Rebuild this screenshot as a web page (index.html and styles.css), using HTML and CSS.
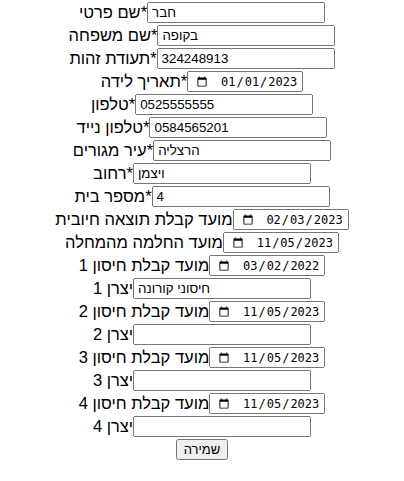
FILE: index.html
```html
<!DOCTYPE html>
<html lang="he">
<head>
<meta charset="utf-8">
<link rel="stylesheet" href="styles.css">
</head>
<body>
<form class="form">
  <div class="row"><label class="lbl">שם פרטי*</label><input class="txt" type="text" value="חבר"></div>
  <div class="row"><label class="lbl">שם משפחה*</label><input class="txt" type="text" value="בקופה"></div>
  <div class="row"><label class="lbl">תעודת זהות*</label><input class="txt" type="text" value="324248913"></div>
  <div class="row"><label class="lbl">תאריך לידה*</label><input class="date" type="date" value="2023-01-01"></div>
  <div class="row"><label class="lbl">טלפון*</label><input class="txt" type="text" value="0525555555"></div>
  <div class="row"><label class="lbl">טלפון נייד*</label><input class="txt" type="text" value="0584565201"></div>
  <div class="row"><label class="lbl">עיר מגורים*</label><input class="txt" type="text" value="הרצליה"></div>
  <div class="row"><label class="lbl">רחוב*</label><input class="txt" type="text" value="ויצמן"></div>
  <div class="row"><label class="lbl">מספר בית*</label><input class="txt" type="text" value="4"></div>
  <div class="row"><label class="lbl">מועד קבלת תוצאה חיובית</label><input class="date" type="date" value="2023-02-03"></div>
  <div class="row"><label class="lbl">מועד החלמה מהמחלה</label><input class="date" type="date" value="2023-11-05"></div>
  <div class="row"><label class="lbl">מועד קבלת חיסון 1</label><input class="date" type="date" value="2022-03-02"></div>
  <div class="row"><label class="lbl">יצרן 1</label><input class="txt" type="text" value="חיסוני קורונה"></div>
  <div class="row"><label class="lbl">מועד קבלת חיסון 2</label><input class="date" type="date" value="2023-11-05"></div>
  <div class="row"><label class="lbl">יצרן 2</label><input class="txt" type="text" value=""></div>
  <div class="row"><label class="lbl">מועד קבלת חיסון 3</label><input class="date" type="date" value="2023-11-05"></div>
  <div class="row"><label class="lbl">יצרן 3</label><input class="txt" type="text" value=""></div>
  <div class="row"><label class="lbl">מועד קבלת חיסון 4</label><input class="date" type="date" value="2023-11-05"></div>
  <div class="row"><label class="lbl">יצרן 4</label><input class="txt" type="text" value=""></div>
  <div class="row"><button class="btn" type="button">שמירה</button></div>
</form>
</body>
</html>
```
FILE: styles.css
```css
html, body {
  margin: 0;
  padding: 0;
  background: #fff;
}
body {
  font-family: "Liberation Sans", Arial, sans-serif;
  color: #000;
}
.form {
  text-align: center;
  margin: 0;
}
.row {
  height: 23px;
  line-height: 23px;
  white-space: nowrap;
}
.lbl {
  font-size: 16.5px;
  vertical-align: middle;
}
.txt {
  box-sizing: border-box;
  width: 178px;
  height: 21px;
  font-family: "Liberation Sans", Arial, sans-serif;
  font-size: 13.33px;
  padding: 1px 3px;
  vertical-align: middle;
}
.date {
  box-sizing: border-box;
  width: 116px;
  height: 21px;
  font-family: "DejaVu Sans Mono", monospace;
  font-size: 12px;
  padding: 1px 3px;
  vertical-align: middle;
  text-align: right;
}
.date::-webkit-calendar-picker-indicator {
  order: -1;
  margin-left: 2px;
  margin-right: auto;
}
.date::-webkit-datetime-edit {
  text-align: right;
}
.btn {
  font-family: "Liberation Sans", Arial, sans-serif;
  font-size: 13px;
  vertical-align: middle;
}
```
